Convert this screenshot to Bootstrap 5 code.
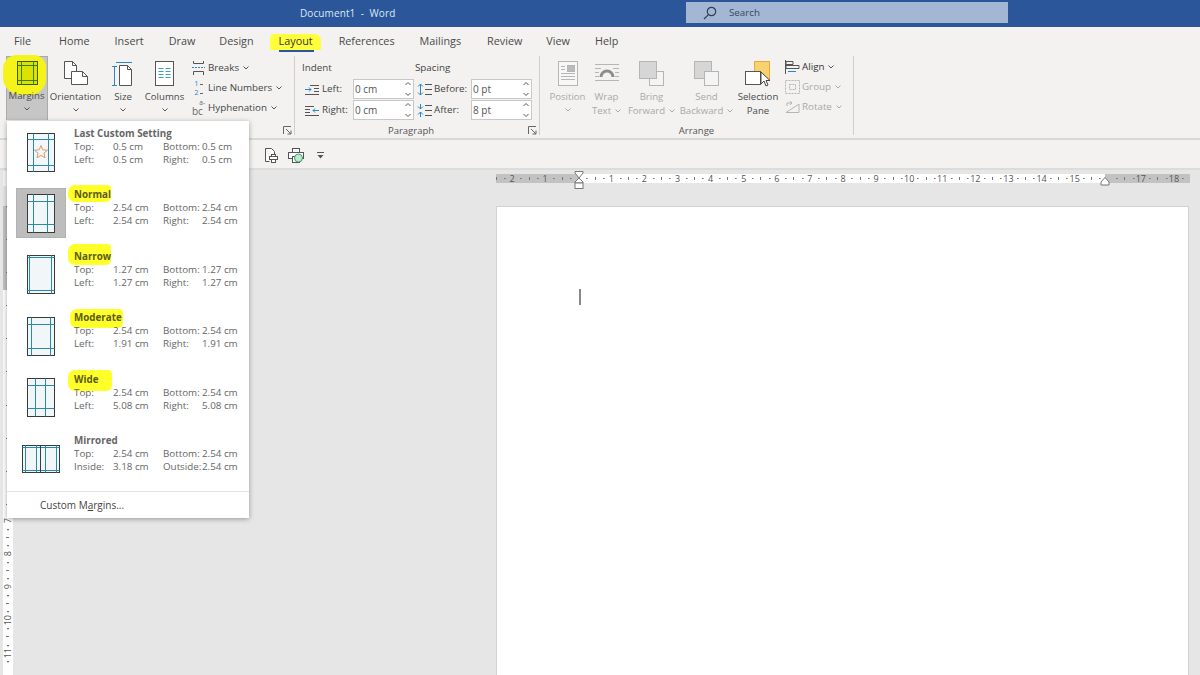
<!DOCTYPE html>
<html lang="en">
<head>
<meta charset="utf-8">
<title>Document1 - Word</title>
<link href="https://cdn.jsdelivr.net/npm/bootstrap@5.3.0/dist/css/bootstrap.min.css" rel="stylesheet">
<style>
html,body{width:1200px;height:675px;overflow:hidden}
body{font-family:"Open Sans","Liberation Sans",sans-serif;font-size:10.5px;color:#444;background:#e6e6e6;position:relative}
svg{display:block;overflow:visible}
.titlebar{height:27px;background:#2b579a;color:#dbe7f5;padding-left:300px}
.title-text{font-size:10px;width:386px;letter-spacing:.1px}
.searchbox{width:322px;height:21px;background:#a3b7d4;color:#37475f;font-size:9.8px;padding-left:17px;gap:12px;margin-bottom:2px;line-height:22px}
.tabbar{height:29px;background:#f3f2f1;font-size:10.8px;padding-top:7px;color:#4a4a4a}
.wtab{position:relative;padding:0 1px;white-space:nowrap;height:22px;line-height:14px}
.wtab-on{background:linear-gradient(#ffff3c,#ffff3c) 0 0/100% 16px no-repeat;color:#333;font-weight:500;border-radius:4px 6px 0 0}
.wtab-on::after{content:"";position:absolute;left:9px;right:7px;top:16px;height:2px;background:#2b579a}
.ribbon{height:84px;background:#f3f2f1;border-bottom:2px solid #d8d8d6}
.rgroup{position:relative;height:79px;border-right:1px solid #cfcfcd}
.rgroup-label{position:absolute;bottom:-3px;left:0;right:0;text-align:center;font-size:9.5px;color:#555}
.launcher{position:absolute;right:2px;bottom:0;width:9px;height:9px}
.bigbtn{text-align:center;font-size:9.6px;line-height:14px;color:#4a4a4a;height:64px;position:relative}
.bigbtn svg{margin:0 auto 4px}
.bigbtn .d-flex svg{margin:0}
.bigbtn svg.chev{display:block;margin:4px auto 0}
.bigbtn-on{background:#c6c6c6;border:1px solid #aaa;border-bottom:0;height:64px;position:relative}
.muted-btn{color:#a9a9a9}
.marker{position:absolute;background:#f4f41a;z-index:0;border-radius:14px 12px 16px 18px}
.smallrow{height:20px;gap:4px;font-size:9.8px;white-space:nowrap}
.field{background:#fff;border:1px solid #c8c8c8;height:20px;width:61px;padding-left:1px;font-size:10px;color:#555;line-height:18px;position:relative;flex:none}
.spin{position:absolute;right:2px;top:2px}
.qat{height:30px;background:#f3f2f1;border-bottom:2px solid #dcdcda;padding:2px 0 0 264px;gap:10px}
.work{position:relative;height:505px;background:#e6e6e6}
.hruler{position:absolute;left:495.5px;top:4px;width:694px;height:9px;display:flex;overflow:visible;background:linear-gradient(90deg,#c2c2c2 83px,#fff 83px,#fff 609px,#c2c2c2 609px)}
.hcell{flex:0 0 33.1px;text-align:center;font-size:9px;line-height:9px;color:#555;background:
 linear-gradient(#777,#777) 0 3px/1px 3px no-repeat,
 radial-gradient(circle,#777 .7px,transparent 1px) 8.3px 0/1.6px 9px no-repeat,
 radial-gradient(circle,#777 .7px,transparent 1px) 24.8px 0/1.6px 9px no-repeat}
.rulercorner{position:absolute;left:3px;top:1px;width:10px;height:15px;background:#f6f6f6}
.vruler{position:absolute;left:3px;top:36px;width:10px;height:469px;display:flex;flex-direction:column;background:linear-gradient(#c2c2c2 84px,#fff 84px)}
.vcell{flex:0 0 33.1px;display:flex;align-items:center;justify-content:center;font-size:9px;color:#555;background:
 linear-gradient(#777,#777) 3px 0/3px 1px no-repeat,
 radial-gradient(circle,#777 .7px,transparent 1px) 0 8.3px/10px 1.6px no-repeat,
 radial-gradient(circle,#777 .7px,transparent 1px) 0 24.8px/10px 1.6px no-repeat}
.vcell span{writing-mode:vertical-rl;transform:rotate(180deg);line-height:10px}
.docpage{position:absolute;left:496px;top:36px;width:693px;height:480px;background:#fff;border:1px solid #d2d2d2}
.caret{position:absolute;left:82px;top:82px;width:2px;height:16px;background:#888}
.tabstop{position:absolute;z-index:1}
.margin-menu{position:absolute;left:7px;top:121px;width:242px;height:397px;background:#fff;box-shadow:0 1px 5px rgba(0,0,0,.35);z-index:5;padding-top:6px}
.mitem{height:61.4px;display:flex;position:relative}
.micon{width:67px;flex:none;display:flex;align-items:center;justify-content:center;height:50px;margin-top:0}
.micon-on{background:#bdbdbd;border:1px solid #b2b2b2;width:50px;margin-left:9px;margin-right:8px}
.mtext{font-size:9.8px;line-height:13px;color:#666;position:relative;width:170px}
.mname{font-weight:700;color:#666;position:relative;z-index:1;height:13px;line-height:13px}
.mname-hl{color:#5b5b12}
.mgrid{display:grid;grid-template-columns:39px 50px 39px auto;position:relative;z-index:1;white-space:nowrap}
.hl{position:absolute;background:#ffff2a;z-index:0;border-radius:7px 4px 5px 7px}
.customrow{border-top:1px solid #e3e3e3;height:27px;padding-left:33px;font-size:10px;line-height:26px;color:#444;margin-top:-1px}
.iconstack{width:13px;flex:none;text-align:center}
.numdash{display:inline-block;width:3px;height:1px;background:#666;margin-left:1px;vertical-align:middle}
</style>
</head>
<body>
<div class="titlebar d-flex align-items-center">
  <div class="title-text">Document1&nbsp; -&nbsp; Word</div>
  <div class="searchbox d-flex align-items-center">
    <svg width="14" height="14" viewBox="0 0 14 14" fill="none" stroke="#2f3f58" stroke-width="1.2"><circle cx="8.5" cy="5.5" r="4.2"/><path d="M5.4 8.6 1 13"/></svg>
    <span>Search</span>
  </div>
</div>

<div class="tabbar d-flex">
  <div class="wtab" style="margin-left:13px">File</div>
  <div class="wtab" style="margin-left:26px">Home</div>
  <div class="wtab" style="margin-left:23px">Insert</div>
  <div class="wtab" style="margin-left:23px">Draw</div>
  <div class="wtab" style="margin-left:22px">Design</div>
  <div class="wtab wtab-on" style="margin-left:15px;padding:0 8px 0 9px">Layout</div>
  <div class="wtab" style="margin-left:17px">References</div>
  <div class="wtab" style="margin-left:23px">Mailings</div>
  <div class="wtab" style="margin-left:24px">Review</div>
  <div class="wtab" style="margin-left:22px">View</div>
  <div class="wtab" style="margin-left:23px">Help</div>
</div>

<div class="ribbon d-flex">
  <!-- Page Setup -->
  <div class="rgroup d-flex" style="width:295px;padding-left:6px">
    <div class="bigbtn bigbtn-on" style="width:42px">
      <div class="marker" style="left:-4px;top:-2px;width:43px;height:40px"></div>
      <svg class="position-relative" style="margin-top:4px;margin-bottom:4px" width="21" height="24" viewBox="0 0 21 24" fill="#dbe100" stroke="#3d5a0c" stroke-width="1"><rect x=".5" y=".5" width="20" height="23"/><path d="M.5 4.500h20M.5 19.500h20M4.500 .5v23M16.500 .5v23" stroke="#3f7d2a"/></svg>
      <div class="position-relative" style="padding-right:1px">Margins</div>
      <svg class="chev" width="6" height="4" viewBox="0 0 6 4" fill="none" stroke="#555"><path d="M.5.5 3 3 5.500.5"/></svg>
    </div>
    <div class="bigbtn" style="width:55px;padding-top:5px">
      <svg width="26" height="25" viewBox="0 0 26 25" fill="#fff" stroke="#555"><path d="M1.500.5h8l4 4v13h-12z"/><path d="M9.500.5v4h4" fill="none"/><path d="M8.500 10.500h11l5 5v8h-16z"/><path d="M19.500 10.500v5h5" fill="none"/></svg>
      <div>Orientation</div>
      <svg class="chev" width="6" height="4" viewBox="0 0 6 4" fill="none" stroke="#555"><path d="M.5.5 3 3 5.500.5"/></svg>
    </div>
    <div class="bigbtn" style="width:40px;padding-top:5px">
      <svg width="20" height="25" viewBox="0 0 20 25" fill="#fff" stroke="#555"><path d="M6.500 4.500h8l4 4v16h-12z"/><path d="M14.500 4.500v4h4" fill="none"/><path d="M3 1.500h16M1.500 5v19M-1 5.500h5M-1 24.500h5" fill="none" stroke="#2e86c1"/></svg>
      <div>Size</div>
      <svg class="chev" width="6" height="4" viewBox="0 0 6 4" fill="none" stroke="#555"><path d="M.5.5 3 3 5.500.5"/></svg>
    </div>
    <div class="bigbtn" style="width:43px;padding-top:5px">
      <svg width="19" height="25" viewBox="0 0 19 25" fill="#fff" stroke="#555"><rect x=".5" y=".5" width="18" height="24"/><path d="M3.500 7.500h5M3.500 10.500h5M3.500 13.500h5M3.500 16.500h5M10.500 7.500h5M10.500 10.500h5M10.500 13.500h5M10.500 16.500h5" stroke="#3aa0b8"/></svg>
      <div>Columns</div>
      <svg class="chev" width="6" height="4" viewBox="0 0 6 4" fill="none" stroke="#555"><path d="M.5.5 3 3 5.500.5"/></svg>
    </div>
    <div class="d-flex flex-column" style="padding-left:6px;padding-top:2px">
      <div class="smallrow d-flex align-items-center"><svg width="13" height="14" viewBox="0 0 13 14" fill="none" stroke="#555"><path d="M1.500 0v2.500h10V0M1.500 14v-3.500h10V14"/><path d="M0 6.500h13" stroke="#2e86c1" stroke-dasharray="2 1"/></svg><span style="margin-left:-1px">Breaks</span><svg width="6" height="4" viewBox="0 0 6 4" fill="none" stroke="#555"><path d="M.5.5 3 3 5.500.5"/></svg></div>
      <div class="smallrow d-flex align-items-center"><div class="iconstack" style="font-size:7.5px;line-height:9px;color:#2e86c1"><div>1<i class="numdash"></i></div><div>2<i class="numdash"></i></div></div><span style="margin-left:-1px">Line Numbers</span><svg width="6" height="4" viewBox="0 0 6 4" fill="none" stroke="#555"><path d="M.5.5 3 3 5.500.5"/></svg></div>
      <div class="smallrow d-flex align-items-center"><div class="iconstack" style="color:#666"><div class="text-end" style="font-size:6.5px;line-height:7px">a-</div><div class="text-start" style="font-size:10px;line-height:11px">bc</div></div><span style="margin-left:-1px">Hyphenation</span><svg width="6" height="4" viewBox="0 0 6 4" fill="none" stroke="#555"><path d="M.5.5 3 3 5.500.5"/></svg></div>
    </div>
    <svg class="launcher" viewBox="0 0 9 9" fill="none" stroke="#666"><path d="M.5 8V.5H8M3 3l5 5M8 4.500V8H4.500"/></svg>
  </div>

  <!-- Paragraph -->
  <div class="rgroup" style="width:245px;padding:5px 0 0 7px">
    <div class="d-flex" style="height:18px;font-size:9.8px;line-height:14px"><span style="width:113px">Indent</span><span>Spacing</span></div>
    <div class="d-flex" style="margin-bottom:1px">
      <div class="smallrow d-flex align-items-center" style="width:115px;padding-left:3px">
        <svg width="14" height="11" viewBox="0 0 14 11" fill="none" stroke="#555"><path d="M5 1.500h9M9 4.500h5M9 7.500h5M0 10.500h14"/><path d="M0 5.500h6M4 3.500l2 2-2 2" stroke="#2e86c1"/></svg><span style="margin-left:-1px">Left:</span>
        <div class="field ms-auto" style="margin-right:3px">0 cm<svg class="spin" width="6" height="14" viewBox="0 0 6 14" fill="none" stroke="#555"><path d="M.5 3 3 .5 5.500 3M.5 11 3 13.500 5.500 11"/></svg></div>
      </div>
      <div class="smallrow d-flex align-items-center">
        <svg width="15" height="13" viewBox="0 0 15 13" fill="none" stroke="#555"><path d="M8 1.500h7M8 6.500h7M8 11.500h7"/><path d="M3.500 1v11M1 3.500l2.500-2.500 2.500 2.500M1 9.500l2.500 2.500 2.500-2.500" stroke="#2e86c1"/></svg><span style="margin-left:-2px;width:34px">Before:</span>
        <div class="field" style="margin-left:-1px">0 pt<svg class="spin" width="6" height="14" viewBox="0 0 6 14" fill="none" stroke="#555"><path d="M.5 3 3 .5 5.500 3M.5 11 3 13.500 5.500 11"/></svg></div>
      </div>
    </div>
    <div class="d-flex">
      <div class="smallrow d-flex align-items-center" style="width:115px;padding-left:3px">
        <svg width="14" height="11" viewBox="0 0 14 11" fill="none" stroke="#555"><path d="M0 1.500h9M0 4.500h5M0 7.500h5M0 10.500h14"/><path d="M8 5.500h6M10 3.500l-2 2 2 2" stroke="#2e86c1"/></svg><span style="margin-left:-1px">Right:</span>
        <div class="field ms-auto" style="margin-right:3px">0 cm<svg class="spin" width="6" height="14" viewBox="0 0 6 14" fill="none" stroke="#555"><path d="M.5 3 3 .5 5.500 3M.5 11 3 13.500 5.500 11"/></svg></div>
      </div>
      <div class="smallrow d-flex align-items-center">
        <svg width="15" height="13" viewBox="0 0 15 13" fill="none" stroke="#555"><path d="M8 1.500h7M8 6.500h7M8 11.500h7"/><path d="M3.500 0v5M1 2.500l2.500 2.500 2.500-2.500M3.500 13V8M1 10.500l2.500-2.500 2.500 2.500" stroke="#2e86c1"/></svg><span style="margin-left:-2px;width:34px">After:</span>
        <div class="field" style="margin-left:-1px">8 pt<svg class="spin" width="6" height="14" viewBox="0 0 6 14" fill="none" stroke="#555"><path d="M.5 3 3 .5 5.500 3M.5 11 3 13.500 5.500 11"/></svg></div>
      </div>
    </div>
    <div class="rgroup-label" style="padding-right:12px">Paragraph</div>
    <svg class="launcher" viewBox="0 0 9 9" fill="none" stroke="#666"><path d="M.5 8V.5H8M3 3l5 5M8 4.500V8H4.500"/></svg>
  </div>

  <!-- Arrange -->
  <div class="rgroup d-flex" style="width:314px;padding-left:8px">
    <div class="bigbtn muted-btn" style="width:39px;padding-top:5px">
      <svg width="20" height="25" viewBox="0 0 20 25" fill="#f7f7f7" stroke="#b5b5b5"><rect x=".5" y=".5" width="19" height="24"/><rect x="9.500" y="4.500" width="7" height="6" fill="#bbb"/><path d="M3 5.500h4M3 8.500h4M3 12.500h14M3 15.500h14M3 18.500h14"/></svg>
      <div>Position</div>
      <svg class="chev" width="6" height="4" viewBox="0 0 6 4" fill="none" stroke="#aaa"><path d="M.5.5 3 3 5.500.5"/></svg>
    </div>
    <div class="bigbtn muted-btn" style="width:39px;padding-top:5px">
      <svg width="26" height="25" viewBox="0 0 26 25" fill="none" stroke="#b5b5b5"><path d="M1 3.500h24M1 7.500h6M19 7.500h6M1 11.500h4M21 11.500h4M1 15.500h4M21 15.500h4M1 19.500h24"/><path d="M7 16a6 6 0 0 1 12 0" stroke="#8c8c8c" stroke-width="3"/></svg>
      <div>Wrap</div>
      <div class="d-flex justify-content-center align-items-center gap-1">Text<svg width="6" height="4" viewBox="0 0 6 4" fill="none" stroke="#aaa"><path d="M.5.5 3 3 5.500.5"/></svg></div>
    </div>
    <div class="bigbtn muted-btn" style="width:51px;padding-top:5px">
      <svg width="25" height="25" viewBox="0 0 25 25" stroke="#b5b5b5"><rect x="10.500" y="10.500" width="14" height="14" fill="#f4f4f4"/><rect x=".5" y=".5" width="17" height="17" fill="#d6d6d6"/></svg>
      <div>Bring</div>
      <div class="d-flex justify-content-center align-items-center gap-1">Forward<svg width="6" height="4" viewBox="0 0 6 4" fill="none" stroke="#aaa"><path d="M.5.5 3 3 5.500.5"/></svg></div>
    </div>
    <div class="bigbtn muted-btn" style="width:59px;padding-top:5px">
      <svg width="25" height="25" viewBox="0 0 25 25" stroke="#b5b5b5"><rect x=".5" y=".5" width="17" height="17" fill="#d6d6d6"/><rect x="10.500" y="10.500" width="14" height="14" fill="#f4f4f4"/></svg>
      <div>Send</div>
      <div class="d-flex justify-content-center align-items-center gap-1">Backward<svg width="6" height="4" viewBox="0 0 6 4" fill="none" stroke="#aaa"><path d="M.5.5 3 3 5.500.5"/></svg></div>
    </div>
    <div class="bigbtn" style="width:44px;padding-top:5px">
      <svg style="margin-bottom:3px" width="27" height="26" viewBox="0 0 27 26" stroke="#666"><rect x="9.500" y=".5" width="15" height="19" fill="#f8d26f" stroke="#e9a93a"/><rect x=".5" y="10.500" width="15" height="13" fill="#fff" stroke="#555"/><path d="M16 11v12l3-3 2 5 2-1-2-4.500h4z" fill="#fff" stroke="#444"/></svg>
      <div>Selection</div>
      <div>Pane</div>
    </div>
    <div class="d-flex flex-column" style="padding-left:5px;padding-top:1px">
      <div class="smallrow d-flex align-items-center"><svg width="15" height="14" viewBox="0 0 15 14" fill="none" stroke="#555"><path d="M.5 0v14M1 1.500h7v3H1zM1 5.500h13v3H1z"/><path d="M3 11.500h8" stroke="#2e86c1"/></svg><span style="margin-left:-2px;color:#333">Align</span><svg width="6" height="4" viewBox="0 0 6 4" fill="none" stroke="#555"><path d="M.5.5 3 3 5.500.5"/></svg></div>
      <div class="smallrow d-flex align-items-center muted-btn"><svg width="15" height="14" viewBox="0 0 15 14" fill="none" stroke="#b5b5b5" stroke-dasharray="2 1"><rect x=".5" y=".5" width="14" height="13"/><rect x="4.500" y="4.500" width="6" height="5"/></svg><span style="margin-left:-2px">Group</span><svg width="6" height="4" viewBox="0 0 6 4" fill="none" stroke="#aaa"><path d="M.5.5 3 3 5.500.5"/></svg></div>
      <div class="smallrow d-flex align-items-center muted-btn"><svg width="15" height="14" viewBox="0 0 15 14" fill="none" stroke="#b5b5b5"><path d="M1 12.500h13V4zM2 6V3h5M5 1l2 2-2 2"/></svg><span style="margin-left:-2px">Rotate</span><svg width="6" height="4" viewBox="0 0 6 4" fill="none" stroke="#aaa"><path d="M.5.5 3 3 5.500.5"/></svg></div>
    </div>
    <div class="rgroup-label">Arrange</div>
  </div>
</div>

<div class="qat d-flex align-items-center">
  <svg width="14" height="15" viewBox="0 0 14 15" fill="#fff" stroke="#555"><path d="M1.500.5h6l3 3v4M1.500.5v13h4"/><rect x="5.500" y="8.500" width="8" height="3"/><rect x="7.500" y="6.500" width="4" height="2"/><rect x="7.500" y="11.500" width="4" height="3"/></svg>
  <svg width="16" height="15" viewBox="0 0 16 15" fill="#fff" stroke="#555"><rect x="4.500" y=".5" width="7" height="4"/><rect x=".5" y="4.500" width="15" height="6"/><rect x="4.500" y="8.500" width="7" height="6"/><circle cx="10.500" cy="10" r="4" fill="#bfe8cf" stroke="#3e9e6d"/></svg>
  <svg style="margin-left:3px" width="8" height="7" viewBox="0 0 8 7" fill="#555"><path d="M0 0h7v1H0zM.5 3h6L3.500 6.500z"/></svg>
</div>

<div class="work">
  <div class="rulercorner"></div>
  <div class="hruler">
    <div class="hcell">2</div><div class="hcell">1</div><div class="hcell">&nbsp;</div><div class="hcell">1</div><div class="hcell">2</div><div class="hcell">3</div><div class="hcell">4</div><div class="hcell">5</div><div class="hcell">6</div><div class="hcell">7</div><div class="hcell">8</div><div class="hcell">9</div><div class="hcell">10</div><div class="hcell">11</div><div class="hcell">12</div><div class="hcell">13</div><div class="hcell">14</div><div class="hcell">15</div><div class="hcell">&nbsp;</div><div class="hcell">17</div><div class="hcell">18</div>
    <svg class="tabstop" style="left:78px;top:-3px" width="10" height="18" viewBox="0 0 10 18" fill="#fff" stroke="#777"><path d="M1 .5h8v1.500L5 7 1 2zM5 7l4 4v1H1v-1z"/><rect x="1" y="12" width="8" height="5.500"/></svg>
    <svg class="tabstop" style="left:604px;top:3px" width="10" height="9" viewBox="0 0 10 9" fill="#fff" stroke="#777"><path d="M5 .5 9 5v3H1V5z"/></svg>
  </div>
  <div class="vruler">
    <div class="vcell"></div><div class="vcell"></div><div class="vcell"></div><div class="vcell"></div><div class="vcell"></div><div class="vcell"></div><div class="vcell"></div><div class="vcell"></div><div class="vcell"></div><div class="vcell"><span>7</span></div><div class="vcell"><span>8</span></div><div class="vcell"><span>9</span></div><div class="vcell"><span>10</span></div><div class="vcell"><span>11</span></div>
  </div>
  <div class="docpage"><div class="caret"></div></div>
</div>

<div class="margin-menu">
  <div class="mitem">
    <div class="micon"><svg width="28" height="39" viewBox="0 0 28 39" fill="#f1f7fb" stroke="#3a3a3a"><rect x=".5" y=".5" width="27" height="38"/><path d="M.5 6.500h27M.5 32.500h27M6.500 .5v38M21.500 .5v38" stroke="#2b8aa8"/><path d="M14 12.500l1.800 4.300 4.700.4-3.600 3 1.100 4.600-4-2.400-4 2.400 1.100-4.600-3.600-3 4.700-.4z" fill="none" stroke="#e39a5f"/></svg></div>
    <div class="mtext"><div class="mname">Last Custom Setting</div><div class="mgrid"><span>Top:</span><span>0.5 cm</span><span>Bottom:</span><span>0.5 cm</span><span>Left:</span><span>0.5 cm</span><span>Right:</span><span>0.5 cm</span></div></div>
  </div>
  <div class="mitem">
    <div class="micon micon-on"><svg width="28" height="39" viewBox="0 0 28 39" fill="#f1f6f9" stroke="#3a3a3a"><rect x=".5" y=".5" width="27" height="38"/><path d="M.5 30.500h27M.5 7.500h27M6.500 .5v38M20.500 .5v38" stroke="#2b8aa8"/></svg></div>
    <div class="mtext"><div class="hl" style="left:-6px;top:-3px;width:43px;height:17px"></div><div class="mname mname-hl">Normal</div><div class="mgrid"><span>Top:</span><span>2.54 cm</span><span>Bottom:</span><span>2.54 cm</span><span>Left:</span><span>2.54 cm</span><span>Right:</span><span>2.54 cm</span></div></div>
  </div>
  <div class="mitem">
    <div class="micon"><svg width="28" height="39" viewBox="0 0 28 39" fill="#f1f6f9" stroke="#3a3a3a"><rect x=".5" y=".5" width="27" height="38"/><path d="M.5 2.500h27M.5 35.500h27M2.500 .5v38M24.500 .5v38" stroke="#2b8aa8"/></svg></div>
    <div class="mtext"><div class="hl" style="left:-6px;top:-6px;width:43px;height:21px"></div><div class="mname mname-hl">Narrow</div><div class="mgrid"><span>Top:</span><span>1.27 cm</span><span>Bottom:</span><span>1.27 cm</span><span>Left:</span><span>1.27 cm</span><span>Right:</span><span>1.27 cm</span></div></div>
  </div>
  <div class="mitem">
    <div class="micon"><svg width="28" height="39" viewBox="0 0 28 39" fill="#f1f6f9" stroke="#3a3a3a"><rect x=".5" y=".5" width="27" height="38"/><path d="M.5 7.500h27M.5 31.500h27M4.500 .5v38M23.500 .5v38" stroke="#2b8aa8"/></svg></div>
    <div class="mtext"><div class="hl" style="left:-4px;top:-2px;width:53px;height:19px"></div><div class="mname mname-hl">Moderate</div><div class="mgrid"><span>Top:</span><span>2.54 cm</span><span>Bottom:</span><span>2.54 cm</span><span>Left:</span><span>1.91 cm</span><span>Right:</span><span>1.91 cm</span></div></div>
  </div>
  <div class="mitem">
    <div class="micon"><svg width="28" height="39" viewBox="0 0 28 39" fill="#f1f6f9" stroke="#3a3a3a"><rect x=".5" y=".5" width="27" height="38"/><path d="M.5 7.500h27M.5 30.500h27M8.500 .5v38M18.500 .5v38" stroke="#2b8aa8"/></svg></div>
    <div class="mtext"><div class="hl" style="left:-6px;top:-3px;width:44px;height:21px"></div><div class="mname mname-hl">Wide</div><div class="mgrid"><span>Top:</span><span>2.54 cm</span><span>Bottom:</span><span>2.54 cm</span><span>Left:</span><span>5.08 cm</span><span>Right:</span><span>5.08 cm</span></div></div>
  </div>
  <div class="mitem" style="height:58px">
    <div class="micon"><svg width="38" height="28" viewBox="0 0 38 28" fill="#f1f6f9" stroke="#3a3a3a"><rect x=".5" y=".5" width="37" height="27"/><path d="M.5 2.500h37M.5 25.500h37M3.500 .5v27M14.500 .5v27M23.500 .5v27M34.500 .5v27" stroke="#2b8aa8"/><path d="M18.500 .5v27"/></svg></div>
    <div class="mtext"><div class="mname">Mirrored</div><div class="mgrid"><span>Top:</span><span>2.54 cm</span><span>Bottom:</span><span>2.54 cm</span><span>Inside:</span><span>3.18 cm</span><span>Outside:</span><span>2.54 cm</span></div></div>
  </div>
  <div class="customrow">Custom M<u>a</u>rgins...</div>
</div>
</body>
</html>
